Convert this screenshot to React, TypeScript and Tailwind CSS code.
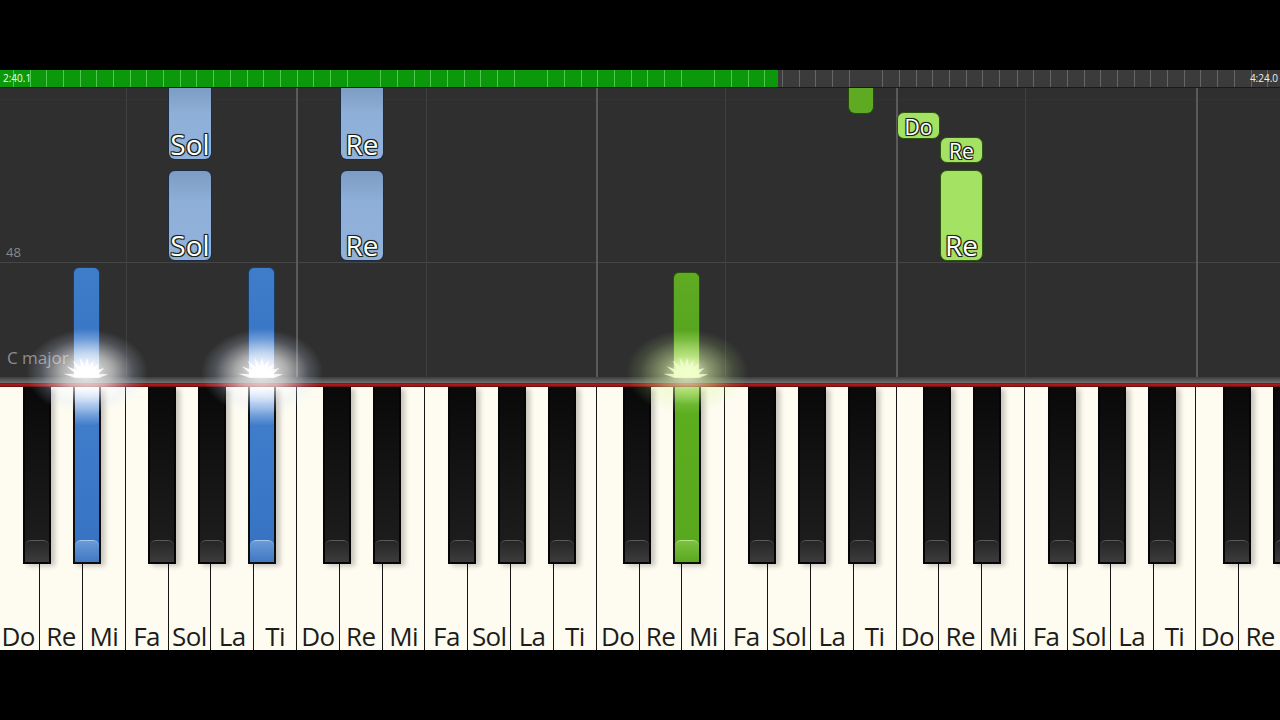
import React from "react";

const W = 42.84;
const X0 = -2.8;
const NAMES = ["Do", "Re", "Mi", "Fa", "Sol", "La", "Ti"];
const BLACK_OFF = [26, 76, 151, 201, 251];
const FONT = { fontFamily: '"Open Sans", "Noto Sans", "DejaVu Sans", sans-serif' };

type Active = "blue" | "green" | undefined;

function activeFor(oct: number, idx: number): Active {
  if (oct === 0 && (idx === 1 || idx === 4)) return "blue";
  if (oct === 2 && idx === 1) return "green";
  return undefined;
}

function starPoints(cx: number, cy: number, r1: number, r2: number, n: number) {
  const pts: string[] = [];
  for (let i = 0; i <= n * 2; i++) {
    const a = Math.PI + (Math.PI * i) / (n * 2);
    const r = i % 2 === 0 ? r2 : r1 * (0.75 + 0.25 * Math.abs(Math.sin(i * 1.7)));
    pts.push(`${(cx + Math.cos(a) * r).toFixed(1)},${(cy + Math.sin(a) * r).toFixed(1)}`);
  }
  return pts.join(" ");
}

function Glow({ x, color }: { x: number; color: "blue" | "green" }) {
  const grad =
    color === "blue"
      ? "bg-[radial-gradient(ellipse_at_center,rgba(255,255,255,0.95)_0%,rgba(255,255,255,0.6)_30%,rgba(210,225,255,0.2)_55%,transparent_72%)]"
      : "bg-[radial-gradient(ellipse_at_center,rgba(250,255,220,0.95)_0%,rgba(225,250,170,0.5)_28%,rgba(200,240,140,0.15)_55%,transparent_72%)]";
  return (
    <div className="pointer-events-none absolute top-[330px] h-[84px] w-[120px]" style={{ left: x - 60 }}>
      <div className={`absolute inset-0 ${grad}`} />
      <svg className="absolute inset-0" width="120" height="84" viewBox="0 0 120 84">
        <polygon
          points={starPoints(60, 48, 24, 12, 9)}
          fill={color === "blue" ? "rgba(255,255,255,0.85)" : "rgba(240,255,200,0.85)"}
        />
      </svg>
    </div>
  );
}

function NoteBlock({
  left,
  top,
  height,
  width,
  label,
  kind,
  size,
  cut,
}: {
  left: number;
  top: number;
  height: number;
  width: number;
  label?: string;
  kind: "paleBlue" | "paleGreen" | "green";
  size?: number;
  cut?: boolean;
}) {
  const cls =
    kind === "paleBlue"
      ? "bg-[linear-gradient(180deg,#7d9cc4_0%,#8eafd8_35%,#92b2da_100%)] border-[#1c2c44]"
      : kind === "paleGreen"
      ? "bg-[#a3e262] border-[#2f5410]"
      : "bg-[#5eaa22] border-[#2a4a0c]";
  const fs = size ?? 28;
  return (
    <div
      className={`absolute flex items-end justify-center border ${cut ? "rounded-b-[7px] border-t-0" : "rounded-[7px]"} ${cls}`}
      style={{ left, top, height, width }}
    >
      {label && (
        <span
          className="leading-[1.2] text-white [text-shadow:-1px_-1px_0_#1a2418,1px_-1px_0_#1a2418,-1px_1px_0_#1a2418,1px_1px_0_#1a2418,0_0_2px_#000]"
          style={{ ...FONT, fontSize: fs, marginBottom: fs < 24 ? -2 : -3 }}
        >
          {label}
        </span>
      )}
    </div>
  );
}

function ActiveColumn({ left, top, color }: { left: number; top: number; color: "blue" | "green" }) {
  const cls =
    color === "blue"
      ? "bg-[linear-gradient(180deg,#3f7cc9_0%,#3a77c6_55%,#7aa6dc_80%,#e8f0ff_100%)] border-[#1d3d66]"
      : "bg-[linear-gradient(180deg,#5fab22_0%,#58a51f_55%,#8cc850_80%,#e6f8c8_100%)] border-[#2c5010]";
  return (
    <div
      className={`absolute w-[27px] rounded-t-[6px] border border-b-0 ${cls}`}
      style={{ left, top, height: 289 - top }}
    />
  );
}

export default function App() {
  const vLines: { x: number; bright: boolean }[] = [];
  for (let k = 0; k < 5; k++) {
    vLines.push({ x: X0 + (3 + 7 * k) * W, bright: false });
    if (k > 0) vLines.push({ x: X0 + 7 * k * W, bright: true });
  }

  const whites: string[] = [];
  for (let i = 0; i < 30; i++) whites.push(NAMES[i % 7]);

  const blacks: { left: number; active: Active }[] = [];
  for (let k = 0; k < 5; k++) {
    BLACK_OFF.forEach((off, idx) => {
      const left = X0 + 7 * k * W + off;
      if (left < 1280) blacks.push({ left, active: activeFor(k, idx) });
    });
  }

  return (
    <div className="relative flex h-[720px] w-[1280px] flex-col overflow-hidden bg-black" style={FONT}>
      <div className="h-[70px] shrink-0" />

      {/* progress bar */}
      <div className="relative flex h-[18px] shrink-0 border-b border-[#1a1a1a]">
        <div className="h-full w-[778px] bg-[#0b990b] bg-[repeating-linear-gradient(90deg,transparent_0,transparent_12.8px,rgba(160,255,160,0.45)_12.8px,rgba(160,255,160,0.45)_13.8px,transparent_13.8px,transparent_16.7px)]" />
        <div className="h-full flex-1 bg-[#3b3b3b] bg-[repeating-linear-gradient(90deg,transparent_0,transparent_12.8px,rgba(120,120,120,0.7)_12.8px,rgba(120,120,120,0.7)_13.8px,transparent_13.8px,transparent_16.7px)] [background-position:-778px_0]" />
        <span className="absolute left-[3px] top-[2px] text-[10px] leading-[1.3] text-[#e8ffe8]">2:40.1</span>
        <span className="absolute right-[2px] top-[2px] text-[10px] leading-[1.3] text-[#eeeeee]">4:24.0</span>
      </div>

      {/* note area */}
      <div className="relative h-[289px] shrink-0 bg-[#2f2f2f]">
        <div className="absolute left-0 right-0 top-[11px] h-px bg-[#333333]" />
        <div className="absolute left-0 right-0 top-[174px] h-px bg-[#464646]" />
        {vLines.map((l, i) => (
          <div
            key={i}
            className={`absolute top-0 h-full ${l.bright ? "w-[2px] bg-[#5a5a5a]" : "w-px bg-[#3f3f3f]"}`}
            style={{ left: l.x - (l.bright ? 1 : 0) }}
          />
        ))}
        <span className="absolute left-[6px] top-[156px] text-[13px] leading-[1.3] text-[#8a8a8a]">48</span>
        <span className="absolute left-[7px] top-[259px] text-[17px] leading-[1.3] text-[#8d8d8d]">C major</span>

        <NoteBlock kind="paleBlue" left={168} top={0} height={72} width={44} label="Sol" cut />
        <NoteBlock kind="paleBlue" left={168} top={82} height={91} width={44} label="Sol" />
        <NoteBlock kind="paleBlue" left={340} top={0} height={72} width={44} label="Re" cut />
        <NoteBlock kind="paleBlue" left={340} top={82} height={91} width={44} label="Re" />

        <NoteBlock kind="green" left={848} top={0} height={26} width={26} cut />
        <NoteBlock kind="paleGreen" left={897} top={24} height={27} width={43} label="Do" size={21} />
        <NoteBlock kind="paleGreen" left={940} top={49} height={26} width={43} label="Re" size={21} />
        <NoteBlock kind="paleGreen" left={940} top={82} height={91} width={43} label="Re" />

        <ActiveColumn left={73} top={179} color="blue" />
        <ActiveColumn left={248} top={179} color="blue" />
        <ActiveColumn left={673} top={184} color="green" />
      </div>

      {/* separator */}
      <div className="relative z-10 h-[6px] shrink-0 bg-[linear-gradient(180deg,#3c3c3c,#707070)]" />
      <div className="relative z-10 h-[4px] shrink-0 bg-[linear-gradient(180deg,#7a1414,#b41e1e,#5a0c0c)]" />

      {/* keyboard */}
      <div className="relative h-[263px] shrink-0 bg-[#fefcf1]">
        <div className="ml-[-2.8px] flex h-full">
          {whites.map((n, i) => (
            <div
              key={i}
              className="flex h-full w-[42.84px] shrink-0 items-end justify-center border-r border-[#151515]"
            >
              <span className="mb-[-2px] text-[26px] leading-[1.2] tracking-[-0.6px] text-[#1c1c1c]">{n}</span>
            </div>
          ))}
        </div>
        {blacks.map((b, i) => {
          const body =
            b.active === "blue"
              ? "bg-[linear-gradient(180deg,#f4f8ff_0%,#b8cff0_8%,#3f7cca_22%,#3672c2_100%)] border-[#0d0d0d]"
              : b.active === "green"
              ? "bg-[linear-gradient(180deg,#8ccc50_0%,#5dad20_10%,#58a71e_100%)] border-[#0d0d0d]"
              : "bg-[linear-gradient(180deg,#090909_0%,#141414_50%,#1f1f1f_100%)] border-[#050505]";
          const foot =
            b.active === "blue"
              ? "bg-[linear-gradient(180deg,#6a9ad8,#3f78c2)] border-[#a9c6ee]"
              : b.active === "green"
              ? "bg-[linear-gradient(180deg,#7cc040,#5aa820)] border-[#b4e48a]"
              : "bg-[linear-gradient(180deg,#262626,#3c3c3c)] border-[#5a5a5a]";
          return (
            <div
              key={i}
              className={`absolute top-0 flex h-[177px] w-[28px] flex-col justify-end border-x-2 border-b-2 shadow-[4px_2px_5px_rgba(0,0,0,0.22)] ${body}`}
              style={{ left: b.left }}
            >
              <div className={`h-[22px] rounded-t-[6px] border-t ${foot}`} />
            </div>
          );
        })}
      </div>

      <div className="flex-1 bg-black" />

      {/* glows over the hit line */}
      <div className="pointer-events-none absolute inset-0 z-20">
        <Glow x={87} color="blue" />
        <Glow x={262} color="blue" />
        <Glow x={687} color="green" />
      </div>
    </div>
  );
}
